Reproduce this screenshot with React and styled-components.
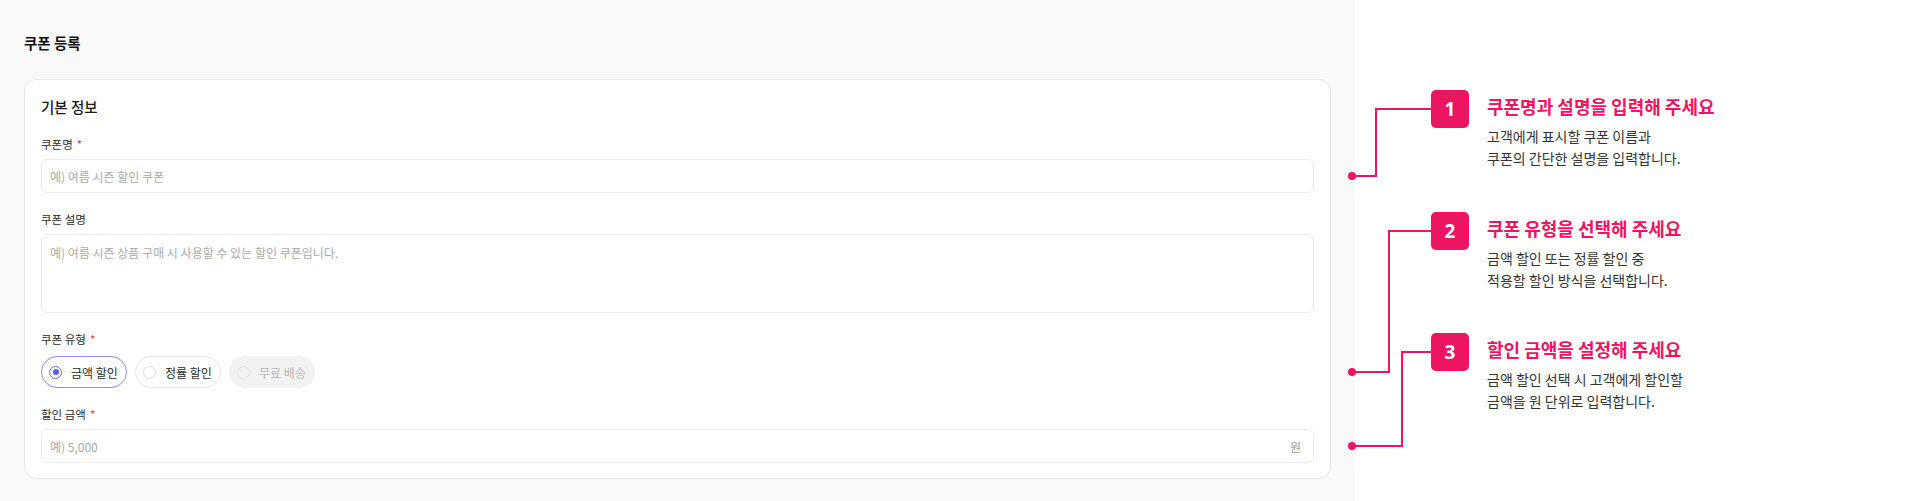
import React from "react";
import styled, { createGlobalStyle } from "styled-components";

const PINK = "#ec1561";

const GlobalStyle = createGlobalStyle`
  html, body {
    margin: 0;
    padding: 0;
    background: #fff;
  }
  body {
    font-family: "Noto Sans CJK KR", "Noto Sans", sans-serif;
    color: #222;
  }
  * {
    box-sizing: border-box;
  }
`;

const Page = styled.div`
  position: relative;
  display: flex;
  width: 1920px;
  height: 501px;
  overflow: hidden;
`;

const FormPanel = styled.section`
  width: 1355px;
  flex-shrink: 0;
  background: #f9f9f9;
  padding: 33px 24px 0 24px;
`;

const PageTitle = styled.h1`
  margin: 0 0 26px;
  font-size: 14.5px;
  line-height: 20px;
  font-weight: 700;
  color: #111;
`;

const Card = styled.div`
  background: #fff;
  border: 1px solid #e7e7e7;
  border-radius: 12px;
  padding: 17px 16px 15px;
`;

const CardTitle = styled.h2`
  margin: 0 0 19px;
  font-size: 14.5px;
  line-height: 20px;
  font-weight: 500;
  color: #1a1a1a;
`;

const Fields = styled.div`
  display: flex;
  flex-direction: column;
  gap: 18px;
`;

const Field = styled.div`
  display: flex;
  flex-direction: column;
`;

const Label = styled.label`
  display: block;
  font-size: 11.5px;
  line-height: 16px;
  font-weight: 400;
  color: #2b2b2b;
  margin-bottom: ${(p) => (p.$tight ? "9px" : "7px")};
`;

const Req = styled.span`
  color: #e5395c;
  margin-left: 4px;
`;

const fieldBox = `
  width: 100%;
  border: 1px solid #ececec;
  border-radius: 6px;
  background: #fff;
  font-family: inherit;
  font-size: 12px;
  color: #333;
  outline: none;
`;

const TextInput = styled.input`
  ${fieldBox}
  height: 34px;
  padding: 0 8px;
  &::placeholder {
    color: #ababab;
  }
`;

const TextArea = styled.textarea`
  ${fieldBox}
  display: block;
  height: 79px;
  padding: 10px 8px;
  line-height: 16px;
  resize: none;
  overflow: hidden;
  &::placeholder {
    color: #ababab;
  }
`;

const InputBox = styled.div`
  ${fieldBox}
  display: flex;
  align-items: center;
  height: 34px;
  padding: 0 12px 0 8px;
`;

const BareInput = styled.input`
  flex: 1;
  border: none;
  outline: none;
  padding: 0;
  background: transparent;
  font-family: inherit;
  font-size: 12px;
  color: #333;
  &::placeholder {
    color: #ababab;
  }
`;

const Suffix = styled.span`
  font-size: 12px;
  color: #999;
`;

const RadioGroup = styled.div`
  display: flex;
  gap: 8px;
`;

const RadioPill = styled.label`
  display: flex;
  align-items: center;
  gap: 9px;
  width: 86px;
  height: 32px;
  padding: 0 0 0 7px;
  border-radius: 16px;
  border: 1px solid
    ${(p) => (p.$checked ? "#8d90ea" : p.$disabled ? "#f2f2f2" : "#e6e6e6")};
  background: ${(p) => (p.$disabled ? "#f2f2f2" : "#fff")};
  font-size: 12px;
  white-space: nowrap;
  color: ${(p) => (p.$disabled ? "#b8b8b8" : "#2b2b2b")};
`;

const RadioDot = styled.span`
  position: relative;
  flex-shrink: 0;
  width: 13px;
  height: 13px;
  border-radius: 50%;
  border: 1px solid
    ${(p) => (p.$checked ? "#6d70e6" : p.$disabled ? "#e4e4e4" : "#dedede")};
  background: ${(p) => (p.$disabled ? "#f2f2f2" : "#fff")};
  &::after {
    content: "";
    display: ${(p) => (p.$checked ? "block" : "none")};
    position: absolute;
    inset: 2.5px;
    border-radius: 50%;
    background: #5b5ee4;
  }
`;

const GuidePanel = styled.aside`
  flex: 1;
  padding: 90px 0 0 76px;
  display: flex;
  flex-direction: column;
`;

const Step = styled.div`
  display: flex;
  gap: 18px;
  min-height: 121.5px;
`;

const Badge = styled.div`
  width: 38px;
  height: 38px;
  flex-shrink: 0;
  border-radius: 5px;
  background: ${PINK};
  color: #fff;
  display: flex;
  align-items: center;
  justify-content: center;
  font-family: "Noto Sans", sans-serif;
  font-size: 19px;
  font-weight: 700;
`;

const StepText = styled.div`
  padding-top: 3px;
`;

const StepTitle = styled.h3`
  margin: 0;
  font-size: 18px;
  line-height: 26px;
  font-weight: 700;
  color: ${PINK};
`;

const StepDesc = styled.p`
  margin: 6px 0 0;
  font-size: 14px;
  line-height: 22px;
  color: #333;
`;

const Connectors = styled.svg`
  position: absolute;
  left: 0;
  top: 0;
  pointer-events: none;
`;

const steps = [
  {
    n: 1,
    title: "쿠폰명과 설명을 입력해 주세요",
    desc: ["고객에게 표시할 쿠폰 이름과", "쿠폰의 간단한 설명을 입력합니다."],
  },
  {
    n: 2,
    title: "쿠폰 유형을 선택해 주세요",
    desc: ["금액 할인 또는 정률 할인 중", "적용할 할인 방식을 선택합니다."],
  },
  {
    n: 3,
    title: "할인 금액을 설정해 주세요",
    desc: ["금액 할인 선택 시 고객에게 할인할", "금액을 원 단위로 입력합니다."],
  },
];

const lines = [
  { from: 176, x: 1376, to: 109 },
  { from: 372, x: 1389, to: 231 },
  { from: 446, x: 1402, to: 352 },
];

const types = [
  { label: "금액 할인", checked: true },
  { label: "정률 할인" },
  { label: "무료 배송", disabled: true },
];

export default function App() {
  return (
    <Page>
      <GlobalStyle />
      <FormPanel>
        <PageTitle>쿠폰 등록</PageTitle>
        <Card>
          <CardTitle>기본 정보</CardTitle>
          <Fields>
            <Field>
              <Label>
                쿠폰명<Req>*</Req>
              </Label>
              <TextInput placeholder="예) 여름 시즌 할인 쿠폰" />
            </Field>
            <Field>
              <Label>쿠폰 설명</Label>
              <TextArea placeholder="예) 여름 시즌 상품 구매 시 사용할 수 있는 할인 쿠폰입니다." />
            </Field>
            <Field>
              <Label $tight>
                쿠폰 유형<Req>*</Req>
              </Label>
              <RadioGroup>
                {types.map((t) => (
                  <RadioPill
                    key={t.label}
                    $checked={t.checked}
                    $disabled={t.disabled}
                  >
                    <RadioDot $checked={t.checked} $disabled={t.disabled} />
                    {t.label}
                  </RadioPill>
                ))}
              </RadioGroup>
            </Field>
            <Field>
              <Label>
                할인 금액<Req>*</Req>
              </Label>
              <InputBox>
                <BareInput placeholder="예) 5,000" />
                <Suffix>원</Suffix>
              </InputBox>
            </Field>
          </Fields>
        </Card>
      </FormPanel>

      <GuidePanel>
        {steps.map((s) => (
          <Step key={s.n}>
            <Badge>{s.n}</Badge>
            <StepText>
              <StepTitle>{s.title}</StepTitle>
              <StepDesc>
                {s.desc[0]}
                <br />
                {s.desc[1]}
              </StepDesc>
            </StepText>
          </Step>
        ))}
      </GuidePanel>

      <Connectors width="1920" height="501" viewBox="0 0 1920 501">
        {lines.map((l) => (
          <g key={l.x}>
            <path
              d={`M1352 ${l.from} H${l.x} V${l.to} H1432`}
              fill="none"
              stroke={PINK}
              strokeWidth="2"
            />
            <circle cx="1352" cy={l.from} r="4" fill={PINK} />
          </g>
        ))}
      </Connectors>
    </Page>
  );
}
